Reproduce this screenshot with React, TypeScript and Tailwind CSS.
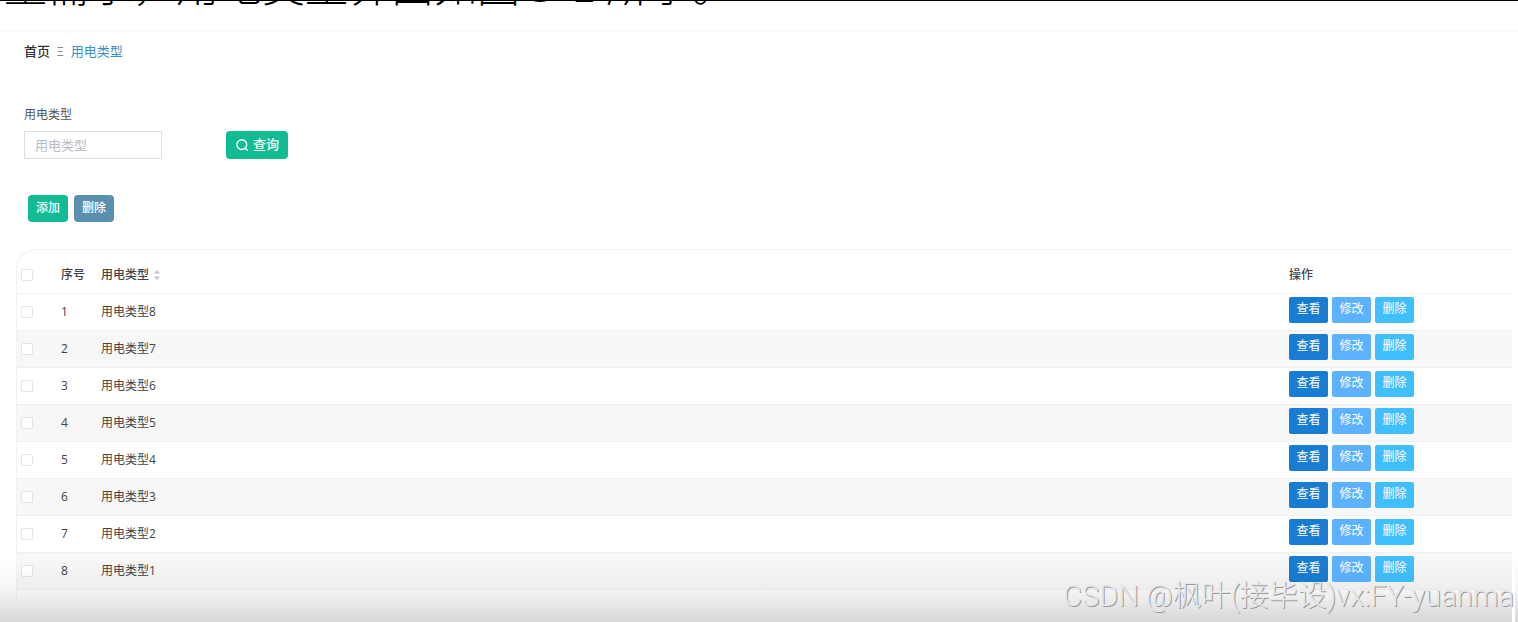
interface UsageType {
  id: number;
  name: string;
}

const rows: UsageType[] = [
  { id: 1, name: '用电类型8' },
  { id: 2, name: '用电类型7' },
  { id: 3, name: '用电类型6' },
  { id: 4, name: '用电类型5' },
  { id: 5, name: '用电类型4' },
  { id: 6, name: '用电类型3' },
  { id: 7, name: '用电类型2' },
  { id: 8, name: '用电类型1' },
];

function Checkbox({ label }: { label: string }) {
  return (
    <input
      type="checkbox"
      aria-label={label}
      className="block size-3 appearance-none rounded-xs border border-[#e2e5ea] bg-white checked:bg-[#1abc9c]"
    />
  );
}

function SearchIcon() {
  return (
    <svg viewBox="0 0 14 14" className="size-3.5" fill="none" stroke="currentColor" strokeWidth="1.4">
      <circle cx="6.8" cy="6.6" r="4.9" />
      <path d="M10.2 10.2 12.4 12.2" strokeLinecap="round" />
    </svg>
  );
}

function SortIcon() {
  return (
    <svg viewBox="0 0 8 12" className="h-3 w-2" fill="#c0c4cc">
      <path d="M4 1 7.2 4.6H.8z" />
      <path d="M4 11 .8 7.4h6.4z" />
    </svg>
  );
}

function RowActions() {
  const base = 'h-[26px] w-[39px] rounded-xs pb-0.5 text-xs text-white';
  return (
    <div className="flex gap-1">
      <button type="button" className={`${base} bg-[#187dd2]`}>
        查看
      </button>
      <button type="button" className={`${base} bg-[#5db2ff]`}>
        修改
      </button>
      <button type="button" className={`${base} bg-[#40bfff]`}>
        删除
      </button>
    </div>
  );
}

export default function App() {
  return (
    <div className="relative flex min-h-screen flex-col overflow-hidden bg-white font-['Open_Sans','Noto_Sans_CJK_SC',sans-serif] text-xs text-[#555]">
      {/* last line of the paragraph above, cut off by the frame */}
      <div className="flex h-1.5 items-end overflow-hidden border-t border-black pl-1">
        <p className="font-['Liberation_Serif','Noto_Sans_CJK_SC',serif] text-[43px] leading-[36px] font-light whitespace-nowrap text-black">
          量需求，用电类型界面如图 5–2 所示。
        </p>
      </div>

      <main className="mt-6 border-t-2 border-[#f9f9f9] pl-4">
        <nav className="mt-2.5 flex h-5 items-center gap-[7px] pl-2 text-[13px]">
          <a href="#home" className="font-medium text-[#333]">
            首页
          </a>
          <span className="text-xs text-[#888]">Ξ</span>
          <a href="#type" className="text-[#3a8fc8]">
            用电类型
          </a>
        </nav>

        <form className="mt-[43px] flex items-end gap-16 pl-2">
          <div className="flex flex-col gap-1.5">
            <label htmlFor="usage-type" className="leading-5">
              用电类型
            </label>
            <input
              id="usage-type"
              type="text"
              placeholder="用电类型"
              className="h-7 w-[138px] border border-[#dcdfe6] px-2.5 text-[13px] placeholder:text-[#b8bcc6]"
            />
          </div>
          <button
            type="button"
            className="flex h-7 items-center gap-1 rounded bg-[#12bc93] px-[9px] text-[13px] font-medium text-white"
          >
            <SearchIcon />
            查询
          </button>
        </form>

        <div className="mt-9 flex gap-1.5 pl-3">
          <button
            type="button"
            className="h-[27px] rounded bg-[#12bc93] px-2 pb-0.5 text-xs font-medium text-white"
          >
            添加
          </button>
          <button
            type="button"
            className="h-[27px] rounded bg-[#5a8fb0] px-2 pb-0.5 text-xs font-medium text-white"
          >
            删除
          </button>
        </div>

        <div className="mt-[27px] mr-1.5 overflow-hidden rounded-tl-[20px] border-t border-l border-[#f2f2f2] pb-2">
          <table className="w-full table-fixed border-collapse text-left text-[#444]">
            <thead>
              <tr className="h-[43px] border-b border-[#f2f2f2]">
                <th className="w-11 pt-2 pl-1">
                  <Checkbox label="全选" />
                </th>
                <th className="w-10 pt-2 font-medium">序号</th>
                <th className="pt-2 font-medium">
                  <span className="flex items-center gap-1">
                    用电类型
                    <SortIcon />
                  </span>
                </th>
                <th className="w-[223px] pt-2 font-medium">操作</th>
              </tr>
            </thead>
            <tbody>
              {rows.map((row) => (
                <tr key={row.id} className="h-[37px] border-b border-[#f0f0f0] even:bg-[#f7f7f7]">
                  <td className="pl-1">
                    <Checkbox label={row.name} />
                  </td>
                  <td>{row.id}</td>
                  <td>{row.name}</td>
                  <td className="pb-1">
                    <RowActions />
                  </td>
                </tr>
              ))}
            </tbody>
          </table>
        </div>
      </main>

      <div className="pointer-events-none absolute inset-x-0 bottom-0 flex h-16">
        <div className="flex-1 bg-linear-to-b from-transparent via-black/4 to-black/16" />
        <div className="w-[3px] bg-white" />
        <div className="w-[3px] bg-linear-to-b from-transparent via-black/4 to-black/16" />
      </div>
      <p className="pointer-events-none absolute right-1 bottom-1 font-['Roboto','Noto_Sans_CJK_SC',sans-serif] text-[29px] leading-[44px] font-light whitespace-nowrap text-[#e8e8e8] [text-shadow:1px_1px_0_#999]">
        CSDN @枫叶(接毕设)vx:FY-yuanma
      </p>
    </div>
  );
}
